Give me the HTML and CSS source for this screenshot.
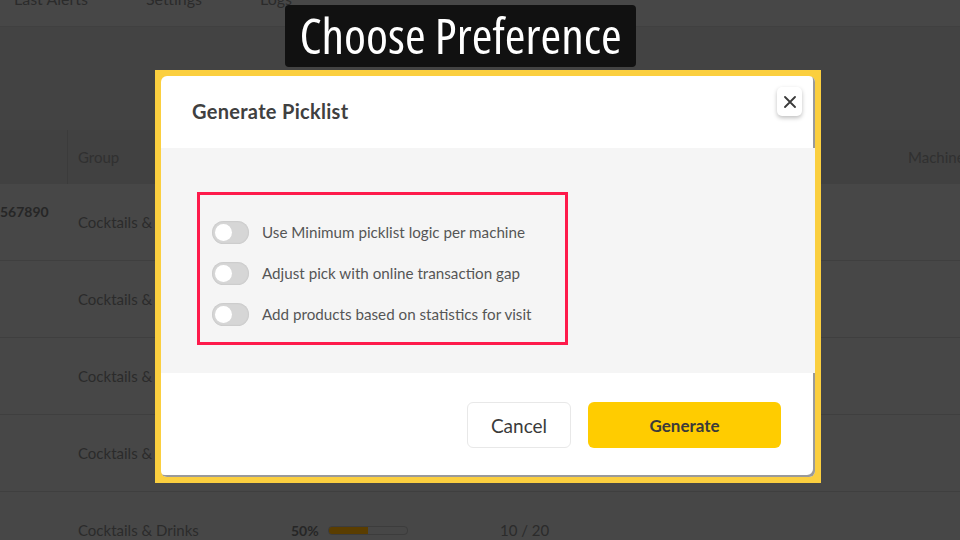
FILE: index.html
```html
<!DOCTYPE html>
<html>
<head>
    <meta charset="utf-8">
    <title>Generate Picklist</title>
    <link rel="stylesheet" href="styles.css">
</head>
<body>
<div class="stage">
    <div class="page">
        <div class="nav">
            <span class="nav-item">Last Alerts</span>
            <span class="nav-item">Settings</span>
            <span class="nav-item">Logs</span>
        </div>
        <div class="toolbar"></div>

        <div class="grid head">
            <div class="cell first"></div>
            <div class="cell">Group</div>
            <div class="cell"></div>
            <div class="cell"></div>
            <div class="cell">Machine</div>
        </div>
        <div class="grid row">
            <div class="cell first id">567890</div>
            <div class="cell">Cocktails &amp; Drinks</div>
            <div class="cell"></div>
            <div class="cell"></div>
            <div class="cell"></div>
        </div>
        <div class="grid row">
            <div class="cell first"></div>
            <div class="cell">Cocktails &amp; Drinks</div>
            <div class="cell"></div>
            <div class="cell"></div>
            <div class="cell"></div>
        </div>
        <div class="grid row">
            <div class="cell first"></div>
            <div class="cell">Cocktails &amp; Drinks</div>
            <div class="cell"></div>
            <div class="cell"></div>
            <div class="cell"></div>
        </div>
        <div class="grid row">
            <div class="cell first"></div>
            <div class="cell">Cocktails &amp; Drinks</div>
            <div class="cell"></div>
            <div class="cell"></div>
            <div class="cell"></div>
        </div>
        <div class="grid row">
            <div class="cell first"></div>
            <div class="cell">Cocktails &amp; Drinks</div>
            <div class="cell"><b class="pct">50%</b><span class="bar"><span class="fill" style="width: 50%"></span></span></div>
            <div class="cell">10 / 20</div>
            <div class="cell"></div>
        </div>
    </div>

    <div class="dialog-layer">
        <div class="caption">Choose Preference</div>
        <div class="frame">
            <div class="modal">
                <div class="modal-head">
                    <h2 class="modal-title">Generate Picklist</h2>
                    <button class="close" type="button">
                        <svg width="12" height="12" viewBox="0 0 12 12"><path d="M1 1L11 11M11 1L1 11" stroke="#3a3a3a" stroke-width="1.8" stroke-linecap="round"/></svg>
                    </button>
                </div>
                <div class="modal-body">
                    <div class="options">
                        <label class="option"><span class="switch"></span>Use Minimum picklist logic per machine</label>
                        <label class="option"><span class="switch"></span>Adjust pick with online transaction gap</label>
                        <label class="option"><span class="switch"></span>Add products based on statistics for visit</label>
                    </div>
                </div>
                <div class="modal-foot">
                    <button class="btn btn-cancel" type="button">Cancel</button>
                    <button class="btn btn-generate" type="button">Generate</button>
                </div>
            </div>
        </div>
    </div>
</div>
</body>
</html>
```

FILE: styles.css
```css
html {
    background: #474747;
}
body {
    margin: 0;
    font-family: "Lato", "Open Sans", sans-serif;
    color: #2b2b2b;
}

/* page and dialog share one grid cell, dialog on top */
.stage {
    display: grid;
    width: 960px;
    height: 540px;
    overflow: hidden;
    background: #474747;
}
.page,
.dialog-layer {
    grid-area: 1 / 1;
}

/* page behind the dialog, shown dimmed */
.page {
    background: #474747;
}
.nav {
    display: flex;
    align-items: flex-start;
    height: 27px;
    padding-left: 14px;
    font-size: 16px;
    line-height: 16px;
    border-bottom: 1px solid #404040;
    box-sizing: border-box;
}
.nav-item {
    margin-top: -9px;
    margin-right: 58px;
}
.toolbar {
    height: 103px;
    background: #434343;
}

.grid {
    display: grid;
    grid-template-columns: 68px 213px 209px 408px 1fr;
}
.cell {
    padding-left: 10px;
    display: flex;
    align-items: center;
    font-size: 15px;
    white-space: nowrap;
}
.cell.first {
    padding-left: 0;
}
.head {
    height: 54px;
    background: #414141;
    color: #303030;
}
.head .first {
    border-right: 1px solid #3b3b3b;
}
.row {
    height: 77px;
    border-bottom: 1px solid #3f3f3f;
    box-sizing: border-box;
}
.id {
    align-self: start;
    padding-top: 19px;
    font-weight: bold;
    font-size: 14px;
    color: #262626;
}
.pct {
    font-size: 14px;
    margin-right: 9px;
    color: #262626;
}
.bar {
    width: 78px;
    height: 7px;
    border: 1px solid #3c3c3c;
    border-radius: 4px;
    background: #474747;
    overflow: hidden;
}
.fill {
    display: block;
    height: 100%;
    background: #5a3d00;
}

/* dialog */
.dialog-layer {
    display: flex;
    flex-direction: column;
    align-items: flex-start;
    padding-top: 5px;
    color: #3a3a3a;
}
.caption {
    margin-left: 285px;
    width: 351px;
    height: 62px;
    box-sizing: border-box;
    background: #111;
    border-radius: 4px;
    color: #fff;
    font-family: "Open Sans", sans-serif;
    font-size: 50px;
    font-stretch: 78%;
    line-height: 60px;
    white-space: nowrap;
    text-align: center;
    overflow: hidden;
}
.frame {
    margin-left: 155px;
    margin-top: 3px;
    width: 666px;
    height: 413px;
    box-sizing: border-box;
    border: 6px solid #fbcf3f;
    background: #fbcf3f;
}
.modal {
    height: 100%;
    background: #fff;
    border-radius: 6px;
    display: flex;
    flex-direction: column;
    overflow: hidden;
    box-shadow: inset -2px -2px 0 #9a9a9a;
}
.modal-head {
    height: 72px;
    display: flex;
    align-items: flex-start;
    justify-content: space-between;
    padding: 0 13px 0 31px;
}
.modal-title {
    margin: 0;
    line-height: 70px;
    font-size: 20px;
    letter-spacing: 0.3px;
    font-weight: bold;
    color: #404040;
}
.close {
    margin-top: 11px;
    width: 25px;
    height: 29px;
    padding: 0;
    border: none;
    border-radius: 5px;
    background: #fff;
    box-shadow: 0 2px 4px rgba(0,0,0,0.25);
    display: flex;
    align-items: center;
    justify-content: center;
}
.modal-body {
    height: 225px;
    background: #f5f5f5;
    padding: 44px 0 0 36px;
    box-sizing: border-box;
}
.options {
    width: 371px;
    height: 153px;
    box-sizing: border-box;
    border: 3px solid #fe1a4b;
    padding: 25px 0 0 12px;
    display: flex;
    flex-direction: column;
    gap: 17px;
}
.option {
    display: flex;
    align-items: center;
    height: 24px;
    font-size: 15.2px;
    color: #555;
}
.switch {
    position: relative;
    width: 37px;
    height: 23px;
    margin-right: 13px;
    border-radius: 12px;
    background: #d6d6d6;
    box-shadow: inset 0 0 2px rgba(0,0,0,0.15);
}
.switch::after {
    content: "";
    position: absolute;
    left: 3px;
    top: 3px;
    width: 17px;
    height: 17px;
    border-radius: 50%;
    background: #fff;
}
.modal-foot {
    flex: 1;
    display: flex;
    justify-content: flex-end;
    align-items: flex-start;
    padding: 29px 34px 0 0;
    gap: 17px;
}
.btn {
    height: 46px;
    border-radius: 6px;
    font-family: "Lato", "Open Sans", sans-serif;
    color: #3a3a3a;
    cursor: pointer;
}
.btn-cancel {
    width: 104px;
    background: #fff;
    border: 1px solid #e8e8e8;
    font-size: 19px;
}
.btn-generate {
    width: 193px;
    border: none;
    background: #ffcc00;
    font-size: 17px;
    font-weight: bold;
}
```
